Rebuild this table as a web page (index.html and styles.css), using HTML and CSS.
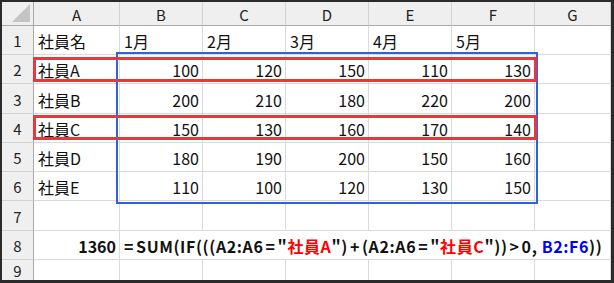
FILE: index.html
```html
<!doctype html>
<html lang="ja">
<head>
    <meta charset="UTF-8">
    <title>SUM IF</title>
    <link rel="stylesheet" href="styles.css">
</head>
<body>

<div class="frame">
    <div class="sheet">
        <div class="corner"><span class="tri"></span></div>
        <div class="ch">A</div>
        <div class="ch">B</div>
        <div class="ch">C</div>
        <div class="ch">D</div>
        <div class="ch">E</div>
        <div class="ch">F</div>
        <div class="ch">G</div>

        <div class="rh">1</div>
        <div class="c">社員名</div>
        <div class="c">1月</div>
        <div class="c">2月</div>
        <div class="c">3月</div>
        <div class="c">4月</div>
        <div class="c">5月</div>
        <div class="c"></div>

        <div class="rh">2</div>
        <div class="c">社員A</div>
        <div class="c num">100</div>
        <div class="c num">120</div>
        <div class="c num">150</div>
        <div class="c num">110</div>
        <div class="c num">130</div>
        <div class="c"></div>

        <div class="rh">3</div>
        <div class="c">社員B</div>
        <div class="c num">200</div>
        <div class="c num">210</div>
        <div class="c num">180</div>
        <div class="c num">220</div>
        <div class="c num">200</div>
        <div class="c"></div>

        <div class="rh">4</div>
        <div class="c">社員C</div>
        <div class="c num">150</div>
        <div class="c num">130</div>
        <div class="c num">160</div>
        <div class="c num">170</div>
        <div class="c num">140</div>
        <div class="c"></div>

        <div class="rh">5</div>
        <div class="c">社員D</div>
        <div class="c num">180</div>
        <div class="c num">190</div>
        <div class="c num">200</div>
        <div class="c num">150</div>
        <div class="c num">160</div>
        <div class="c"></div>

        <div class="rh">6</div>
        <div class="c">社員E</div>
        <div class="c num">110</div>
        <div class="c num">100</div>
        <div class="c num">120</div>
        <div class="c num">130</div>
        <div class="c num">150</div>
        <div class="c"></div>

        <div class="rh">7</div>
        <div class="c"></div>
        <div class="c"></div>
        <div class="c"></div>
        <div class="c"></div>
        <div class="c"></div>
        <div class="c"></div>
        <div class="c"></div>

        <div class="rh">8</div>
        <div class="c num bold">1360</div>
        <div class="c bold formula"><span class="op">=</span>SUM(IF(((A2:A6<span class="op">=</span>"<span class="red">社員A</span>")<span class="op">+</span>(A2:A6<span class="op">=</span>"<span class="red">社員C</span>"))<span class="op">&gt;</span>0,&nbsp;<span class="blue">B2:F6</span>))</div>

        <div class="rh">9</div>
        <div class="c"></div>
        <div class="c"></div>
        <div class="c"></div>
        <div class="c"></div>
        <div class="c"></div>
        <div class="c"></div>
        <div class="c"></div>
    </div>

    <!-- 参照範囲の枠 -->
    <div class="mark range"></div>
    <div class="mark hit row2"></div>
    <div class="mark hit row4"></div>
</div>

</body>
</html>
```

FILE: styles.css
```css
*{margin:0;padding:0;box-sizing:border-box;}
body{
    background:#fff;
    font-family:"Noto Sans CJK JP","Noto Sans",sans-serif;
    font-size:16px;
    color:#111;
}
.frame{
    position:relative;
    width:614px;
    height:283px;
    overflow:hidden;
    border-style:solid;
    border-color:#2b2b2b;
    border-width:2px 3px 3px 2px;
}
.sheet{
    display:grid;
    grid-template-columns:32px 86px 83px 83px 83px 83px 83px 76px;
    grid-template-rows:24px 29px 29px 30px 29px 29px 29px 30px 29px 21px;
}
.corner,.ch,.rh{
    background:#efefef;
    color:#222;
    font-size:15px;
}
.corner{
    position:relative;
    border-right:1px solid #a9a9a9;
    border-bottom:1px solid #a9a9a9;
}
.tri{
    position:absolute;
    right:3px;
    bottom:3px;
    width:0;
    height:0;
    border-left:18px solid transparent;
    border-bottom:18px solid #c4c4c4;
}
.ch{
    display:flex;
    align-items:center;
    justify-content:center;
    border-right:1px solid #d2d2d2;
    border-bottom:1px solid #a9a9a9;
    padding-top:1px;
}
.rh{
    display:flex;
    align-items:center;
    justify-content:center;
    border-right:1px solid #a9a9a9;
    border-bottom:1px solid #d2d2d2;
    padding-top:1px;
}
.c{
    display:flex;
    align-items:center;
    padding:2px 4px 0 4px;
    border-right:1px solid #dadada;
    border-bottom:1px solid #dadada;
    white-space:nowrap;
}
.num{justify-content:flex-end;padding-right:3px;}
.bold{font-weight:bold;}
.formula{
    grid-column:span 6;
    overflow:visible;
    padding-left:2px;
    letter-spacing:0.6px;
}
.op{padding:0 2px;}
.red{color:#ff0000;}
.blue{color:#0000ff;}

/* 枠線は表の上に重ねる */
.mark{position:absolute;}
.range{
    left:114px;
    top:50px;
    width:422px;
    height:152px;
    border:2px solid #2d63e2;
}
.hit{
    left:31px;
    width:504px;
    height:25px;
    border:3px solid #e8383d;
}
.row2{top:55px;}
.row4{top:113px;}
```
